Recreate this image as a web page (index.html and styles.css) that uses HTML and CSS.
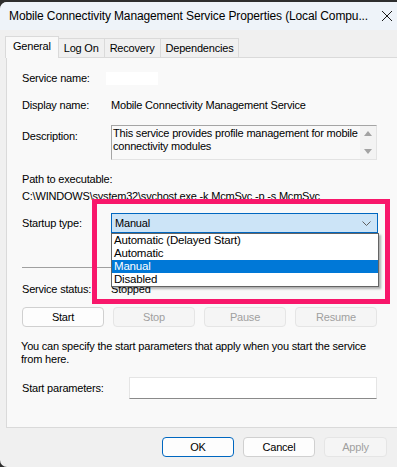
FILE: index.html
```html
<!DOCTYPE html>
<html>
<head>
    <title>Mobile Connectivity Management Service Properties</title>
    <link rel="stylesheet" href="styles.css">
</head>
<body>
    <div class="window">
        <div class="titlebar">
            <span class="title">Mobile Connectivity Management Service Properties (Local Compu...</span>
            <svg class="close" width="12" height="12" viewBox="0 0 12 12">
                <path d="M1 1 L11 11 M11 1 L1 11" stroke="#1a1a1a" stroke-width="1" fill="none"/>
            </svg>
        </div>

        <div class="tabs">
            <div class="tab active">General</div>
            <div class="tab">Log On</div>
            <div class="tab">Recovery</div>
            <div class="tab">Dependencies</div>
        </div>

        <div class="panel">
            <div class="row row-name">
                <div class="label">Service name:</div>
                <div class="redacted"></div>
            </div>
            <div class="row row-display">
                <div class="label">Display name:</div>
                <div class="value">Mobile Connectivity Management Service</div>
            </div>
            <div class="row row-desc">
                <div class="label">Description:</div>
                <div class="desc">
                    <div class="desc-text">This service provides profile management for mobile connectivity modules</div>
                    <div class="scroll">
                        <span class="arrow up"></span>
                        <span class="arrow down"></span>
                    </div>
                </div>
            </div>
            <div class="path">
                <div>Path to executable:</div>
                <div>C:\WINDOWS\system32\svchost.exe -k McmSvc -p -s McmSvc</div>
            </div>
            <div class="row row-startup">
                <div class="label">Startup type:</div>
                <div class="combo-wrap">
                    <div class="combo">
                        <span>Manual</span>
                        <svg width="9" height="5" viewBox="0 0 9 5">
                            <path d="M0.5 0.5 L4.5 4.5 L8.5 0.5" stroke="#5f5f5f" stroke-width="1" fill="none"/>
                        </svg>
                    </div>
                    <ul class="dropdown">
                        <li>Automatic (Delayed Start)</li>
                        <li>Automatic</li>
                        <li class="selected">Manual</li>
                        <li>Disabled</li>
                    </ul>
                </div>
            </div>
            <div class="separator"></div>
            <div class="row row-status">
                <div class="label">Service status:</div>
                <div class="value">Stopped</div>
            </div>
            <div class="buttons">
                <button class="btn">Start</button>
                <button class="btn" disabled>Stop</button>
                <button class="btn" disabled>Pause</button>
                <button class="btn" disabled>Resume</button>
            </div>
            <p class="hint">You can specify the start parameters that apply when you start the service from here.</p>
            <div class="row row-params">
                <div class="label">Start parameters:</div>
                <div class="param-input"></div>
            </div>
        </div>

        <div class="footer">
            <button class="btn dlg default">OK</button>
            <button class="btn dlg">Cancel</button>
            <button class="btn dlg apply" disabled>Apply</button>
        </div>

        <div class="highlight"></div>
    </div>
</body>
</html>
```

FILE: styles.css
```css
body { margin: 0; background: #2e2e2e; font-family: "Liberation Sans", Arial, sans-serif; font-size: 11px; letter-spacing: -0.2px; color: #000; overflow: hidden; }
.window { position: relative; height: 465px; margin-top: 2px; background: #f0f0f0; border-radius: 7px 0 0 7px; overflow: hidden; }

.titlebar { height: 28px; background: #eef3f9; display: flex; align-items: center; padding-left: 9px; }
.title { flex: 1; font-size: 12px; letter-spacing: -0.12px; white-space: nowrap; }
.close { margin-right: 4px; }

.tabs { display: flex; align-items: flex-end; height: 27px; padding-left: 5px; }
.tab { height: 18px; line-height: 18px; padding: 0 5px; border: 1px solid #dadada; border-bottom: none; margin-left: -1px; background: #f0f0f0; }
.tab.active { height: 21px; line-height: 19px; padding: 0 7px; background: #f9f9f9; position: relative; top: 1px; z-index: 1; margin-left: 0; }

.panel { margin-left: 6px; height: 371px; background: #f9f9f9; border: 1px solid #dadada; border-right: none; padding: 0 0 0 15px; box-sizing: border-box; }

.row { display: flex; align-items: center; }
.label { width: 89px; flex: none; }
.row-name { margin-top: 13px; height: 14px; }
.redacted { width: 52px; height: 13px; background: #fff; margin-left: -5px; }
.row-display { margin-top: 13px; height: 14px; }
.row-desc { margin-top: 13px; align-items: flex-start; }
.row-desc .label { padding-top: 5px; }
.desc { display: flex; width: 266px; height: 35px; box-sizing: border-box; border: 1px solid #a5a5a5; border-right-color: #e3e3e3; border-bottom-color: #e3e3e3; background: #f9f9f9; }
.desc-text { flex: 1; padding: 1px 0 0 1px; line-height: 13px; }
.scroll { width: 16px; flex: none; background: #f3f3f3; position: relative; }
.arrow { position: absolute; left: 4px; width: 0; height: 0; border-left: 4px solid transparent; border-right: 4px solid transparent; }
.arrow.up { top: 5px; border-bottom: 5px solid #a3a3a3; }
.arrow.down { bottom: 5px; border-top: 5px solid #a3a3a3; }

.path { margin-top: 11px; line-height: 17px; }

.row-startup { margin-top: 8px; }
.combo-wrap { position: relative; }
.combo { width: 267px; height: 20px; box-sizing: border-box; background: #cce4f7; border: 1px solid #0067c0; display: flex; align-items: center; justify-content: space-between; padding: 0 6px 0 3px; }
.dropdown { position: absolute; left: 0; top: 20px; width: 268px; margin: 0; padding: 0; list-style: none; background: #fff; border: 1px solid #646464; box-sizing: border-box; box-shadow: 2px 2px 2px rgba(0, 0, 0, 0.3); z-index: 2; font-size: 11.5px; }
.dropdown li { height: 13px; line-height: 13px; padding-left: 2px; }
.dropdown li.selected { background: #0078d7; color: #fff; }

.separator { margin-top: 34px; width: 356px; border-top: 1px solid #a0a0a0; }
.row-status { margin-top: 14px; height: 14px; }

.buttons { display: flex; gap: 9px; margin-top: 11px; }
.btn { font: inherit; letter-spacing: inherit; height: 20px; width: 82px; background: #fdfdfd; border: 1px solid #d0d0d0; border-radius: 4px; padding: 0; color: #000; }
.btn:disabled { background: #f5f5f5; border-color: #e5e5e5; color: #a0a0a0; }

.hint { margin: 13px 0 0 -1px; width: 356px; line-height: 13px; }

.row-params { margin-top: 11px; }
.row-params .label { width: 107px; }
.param-input { width: 248px; height: 22px; box-sizing: border-box; background: #fff; border: 1px solid #e5e5e5; border-bottom-color: #8a8a8a; }

.footer { display: flex; gap: 9px; padding: 9px 0 0 162px; }
.dlg { width: 72px; }
.dlg.default { border-color: #0067c0; }
.dlg.apply { width: 63px; }

.highlight { position: absolute; left: 92px; top: 197px; width: 288px; height: 95px; border: 5px solid #f8176b; z-index: 3; }
```
